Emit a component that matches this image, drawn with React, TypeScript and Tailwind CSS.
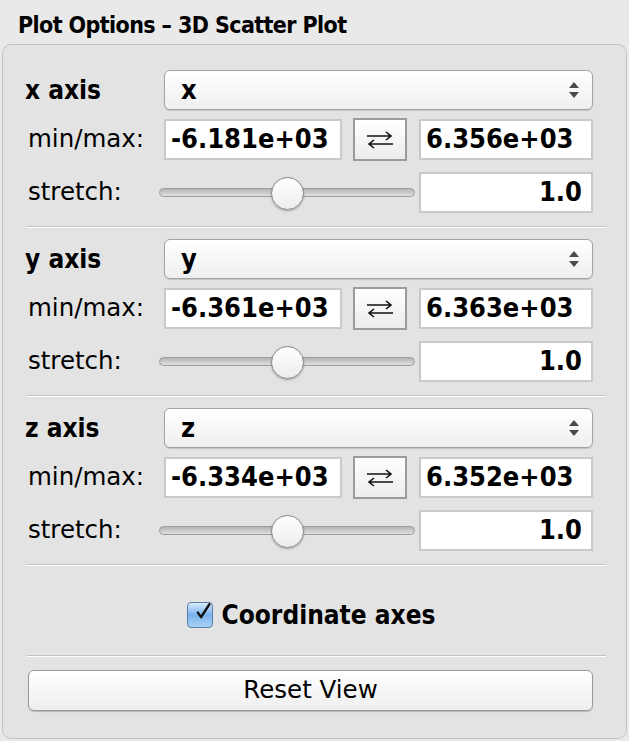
import React from "react";

const reg = "font-['DejaVu_Sans',sans-serif]";
const bold = "font-['DejaVu_Sans_Condensed','DejaVu_Sans',sans-serif] font-bold";

const SwapIcon = () => (
  <svg width="30" height="18" viewBox="0 0 30 18" fill="none" stroke="#111" strokeWidth="1.6">
    <path d="M2 5h24M21 1l5 4-5 4" />
    <path d="M28 13H4M9 9l-5 4 5 4" />
  </svg>
);

const UpDown = () => (
  <svg width="10" height="18" viewBox="0 0 10 18">
    <path d="M5 1l5 6H0z" fill="#4a4a4a" />
    <path d="M5 17l5-6H0z" fill="#4a4a4a" />
  </svg>
);

const Field = ({ value, right, w }: { value: string; right?: boolean; w: string }) => (
  <div
    className={`${w} h-[41px] bg-white border-2 border-[#c9c9c9] flex items-center ${
      right ? "justify-end pr-[9px]" : "pl-[5px]"
    } text-[27px] text-black ${bold}`}
  >
    {value}
  </div>
);

const Slider = () => (
  <div className="relative w-[256px] h-[40px] flex items-center ml-[-5px]">
    <div className="w-full h-[9px] rounded-full border border-[#9c9c9c] bg-gradient-to-b from-[#b4b4b4] to-[#e0e0e0]" />
    <div className="absolute left-[112px] top-[4px] w-[33px] h-[33px] rounded-full border border-[#8a8a8a] bg-gradient-to-b from-white to-[#ececec] shadow-[0_1px_2px_rgba(0,0,0,0.3)]" />
  </div>
);

const Separator = () => (
  <div className="mr-[-13px] ml-[2px]">
    <div className="h-px bg-[#c3c3c3]" />
    <div className="h-px bg-white" />
  </div>
);

const AxisSection = ({ axis, min, max }: { axis: string; min: string; max: string }) => (
  <div className="flex flex-col">
    <div className="flex items-center h-[40px]">
      <div className={`w-[139px] text-[26px] text-black ${bold}`}>{axis} axis</div>
      <div className="flex-1 h-[40px] rounded-[6px] border border-[#a3a3a3] bg-gradient-to-b from-white to-[#efefef] shadow-[0_1px_1px_rgba(0,0,0,0.15)] flex items-center justify-between pl-[16px] pr-[13px]">
        <span className={`text-[27px] text-black ${bold}`}>{axis}</span>
        <UpDown />
      </div>
    </div>
    <div className="flex items-center mt-[8px]">
      <div className={`w-[139px] pl-[3px] text-[24.5px] text-black ${reg}`}>min/max:</div>
      <Field value={min} w="w-[178px]" />
      <button className="ml-[11px] w-[54px] h-[43px] border-2 border-[#9b9b9b] bg-gradient-to-b from-white to-[#ececec] flex items-center justify-center">
        <SwapIcon />
      </button>
      <div className="ml-[12px] flex-1 flex">
        <Field value={max} w="w-full" />
      </div>
    </div>
    <div className="flex items-center mt-[11px]">
      <div className={`w-[139px] pl-[3px] text-[24.5px] text-black ${reg}`}>stretch:</div>
      <Slider />
      <div className="ml-[4px] flex-1 flex">
        <Field value="1.0" right w="w-full" />
      </div>
    </div>
    <div className="mt-[13px] mb-[11px]">
      <Separator />
    </div>
  </div>
);

export default function App() {
  return (
    <div className="w-[629px] h-[741px] bg-[#e9e9e9] overflow-hidden">
      <div className={`h-[44px] pl-[18px] pt-[10px] text-[23px] leading-[30px] tracking-[-0.6px] text-black ${bold}`}>
        Plot Options – 3D Scatter Plot
      </div>
      <div className="mx-[2px] h-[695px] rounded-[9px] border border-[#c4c4c4] bg-[#e3e3e3] pl-[22px] pr-[33px] pt-[25px] flex flex-col">
        <AxisSection axis="x" min="-6.181e+03" max="6.356e+03" />
        <AxisSection axis="y" min="-6.361e+03" max="6.363e+03" />
        <AxisSection axis="z" min="-6.334e+03" max="6.352e+03" />
        <div className="h-[70px] pt-[6px] flex items-center justify-center pl-[4px]">
          <div className="w-[26px] h-[26px] rounded-[4px] border border-[#5b7fa6] bg-gradient-to-b from-[#d8ebfc] via-[#79b2ec] to-[#a9d0f5] flex items-center justify-center">
            <svg width="28" height="30" viewBox="0 0 28 30" className="mt-[-6px] ml-[6px]">
              <path d="M6 16l5 7L24 3" fill="none" stroke="#111" strokeWidth="3.8" strokeLinecap="round" strokeLinejoin="round" />
            </svg>
          </div>
          <span className={`ml-[9px] text-[26px] text-black ${bold}`}>Coordinate axes</span>
        </div>
        <div className="mt-[8px]">
          <Separator />
        </div>
        <button
          className={`mt-[13px] ml-[3px] h-[41px] rounded-[6px] border border-[#9a9a9a] bg-gradient-to-b from-white to-[#eeeeee] shadow-[0_1px_1px_rgba(0,0,0,0.2)] text-[24.5px] text-black ${reg}`}
        >
          Reset View
        </button>
      </div>
    </div>
  );
}
